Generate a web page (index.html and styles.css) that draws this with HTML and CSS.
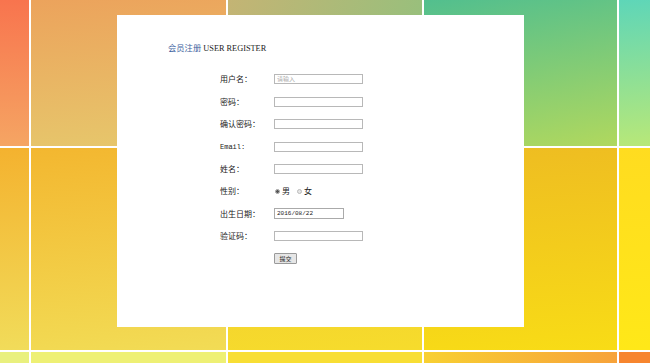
FILE: index.html
```html
<!DOCTYPE html>
<html lang="zh-CN">
<head>
    <meta charset="UTF-8">
    <meta name="viewport" content="width=device-width, initial-scale=1.0">
    <title>会员注册</title>
    <link rel="stylesheet" href="styles.css">
</head>
<body>
    <!-- fond en mosaique -->
    <div class="backdrop">
        <div class="tile t00"></div><div class="tile t01"></div><div class="tile t02"></div><div class="tile t03"></div><div class="tile t04"></div>
        <div class="tile t10"></div><div class="tile t11"></div><div class="tile t12"></div><div class="tile t13"></div><div class="tile t14"></div>
        <div class="tile t20"></div><div class="tile t21"></div><div class="tile t22"></div><div class="tile t23"></div><div class="tile t24"></div>
    </div>

    <div class="panel">
        <h1 class="title"><span class="title-cn">会员注册</span> USER REGISTER</h1>
        <form class="reg-form" onsubmit="return false;">
            <label class="lbl">用户名：</label>
            <input class="field" type="text" placeholder="请输入">

            <label class="lbl">密码：</label>
            <input class="field" type="password">

            <label class="lbl">确认密码：</label>
            <input class="field" type="password">

            <label class="lbl mono">Email:</label>
            <input class="field" type="text">

            <label class="lbl">姓名：</label>
            <input class="field" type="text">

            <label class="lbl">性别：</label>
            <div class="gender">
                <input type="radio" name="sex" checked><span>男</span>
                <input type="radio" name="sex"><span>女</span>
            </div>

            <label class="lbl">出生日期：</label>
            <input class="field date" type="text" value="2016/08/22">

            <label class="lbl">验证码：</label>
            <input class="field" type="text">

            <span></span>
            <div><button class="submit" type="submit">提交</button></div>
        </form>
    </div>
</body>
</html>
```

FILE: styles.css
```css
body {
    margin: 0;
    padding: 0;
    font-family: "Noto Sans CJK SC", sans-serif;
    color: #222;
    overflow: hidden;
}

.backdrop {
    position: fixed;
    top: 0;
    left: 0;
    width: 100%;
    height: 100%;
    z-index: -1;
    display: grid;
    grid-template-columns: 29px 195px 194px 193px 1fr;
    grid-template-rows: 146px 202px 1fr;
    gap: 2px;
    background-color: rgba(255, 255, 255, 0.8);
}

.t00 { background: linear-gradient(180deg, #f8744e, #f5a563); }
.t01 { background: linear-gradient(175deg, #eca35c, #e6c86c); }
.t02 { background: linear-gradient(110deg, #c4b474, #8ec27e); }
.t03 { background: linear-gradient(170deg, #52bf8e, #b0d85e); }
.t04 { background: linear-gradient(175deg, #5ed6b8, #b8e878); }
.t10 { background: linear-gradient(175deg, #f4b22f, #f1dc5a); }
.t11 { background: linear-gradient(175deg, #f3b730, #f2dc55); }
.t12 { background: linear-gradient(175deg, #f2c030, #f6dc2c); }
.t13 { background: linear-gradient(175deg, #eebc22, #f8dc16); }
.t14 { background: linear-gradient(175deg, #ffdc20, #ffe818); }
.t20 { background: #e9f07e; }
.t21 { background: #eef074; }
.t22 { background: #f8de34; }
.t23 { background: linear-gradient(90deg, #f8d032, #f7a23a); }
.t24 { background: #f7852f; }

.panel {
    margin: 15px 0 0 117px;
    width: 407px;
    height: 312px;
    box-sizing: border-box;
    padding: 27px 0 0 51px;
    background-color: #fff;
}

.title {
    margin: 0;
    font-size: 8.3px;
    line-height: 10px;
    font-weight: normal;
    font-family: "Liberation Serif", "Noto Sans CJK SC", serif;
    color: #222;
}

.title-cn {
    color: #3d5f9e;
    font-family: "Noto Sans CJK SC", sans-serif;
}

.reg-form {
    margin: 14px 0 0 52px;
    display: grid;
    grid-template-columns: 54px auto;
    grid-auto-rows: 22.45px;
    align-items: center;
}

.lbl {
    font-size: 8px;
    line-height: 10px;
    color: #222;
}

.mono {
    font-family: "Liberation Mono", monospace;
    font-size: 7px;
}

.field {
    width: 89px;
    height: 10px;
    box-sizing: border-box;
    margin: 0;
    padding: 0 2px;
    border: 1px solid #b8b8b8;
    font-family: "Liberation Mono", monospace;
    font-size: 6px;
    color: #222;
    outline: none;
}

.field::placeholder {
    font-family: "Noto Sans CJK SC", sans-serif;
    color: #aaa;
}

.date {
    width: 70px;
    height: 11px;
    border-color: #aaa;
}

.gender {
    display: flex;
    align-items: center;
    font-size: 8px;
    line-height: 10px;
}

.gender input {
    appearance: none;
    -webkit-appearance: none;
    width: 5px;
    height: 5px;
    margin: 0 2px 0 1px;
    border: 1px solid #bbb;
    border-radius: 50%;
    background-color: #e6e6e6;
}

.gender input:checked {
    background: radial-gradient(circle, #555 0 1.3px, #eee 1.6px);
    border-color: #999;
}

.gender span {
    margin-right: 6px;
}

.submit {
    display: block;
    width: 23px;
    height: 11px;
    padding: 0;
    border: 1px solid #9a9a9a;
    border-radius: 1px;
    background-color: #e6e6e6;
    font-family: "Noto Sans CJK SC", sans-serif;
    font-size: 6px;
    line-height: 9px;
    color: #222;
    cursor: pointer;
}
```
